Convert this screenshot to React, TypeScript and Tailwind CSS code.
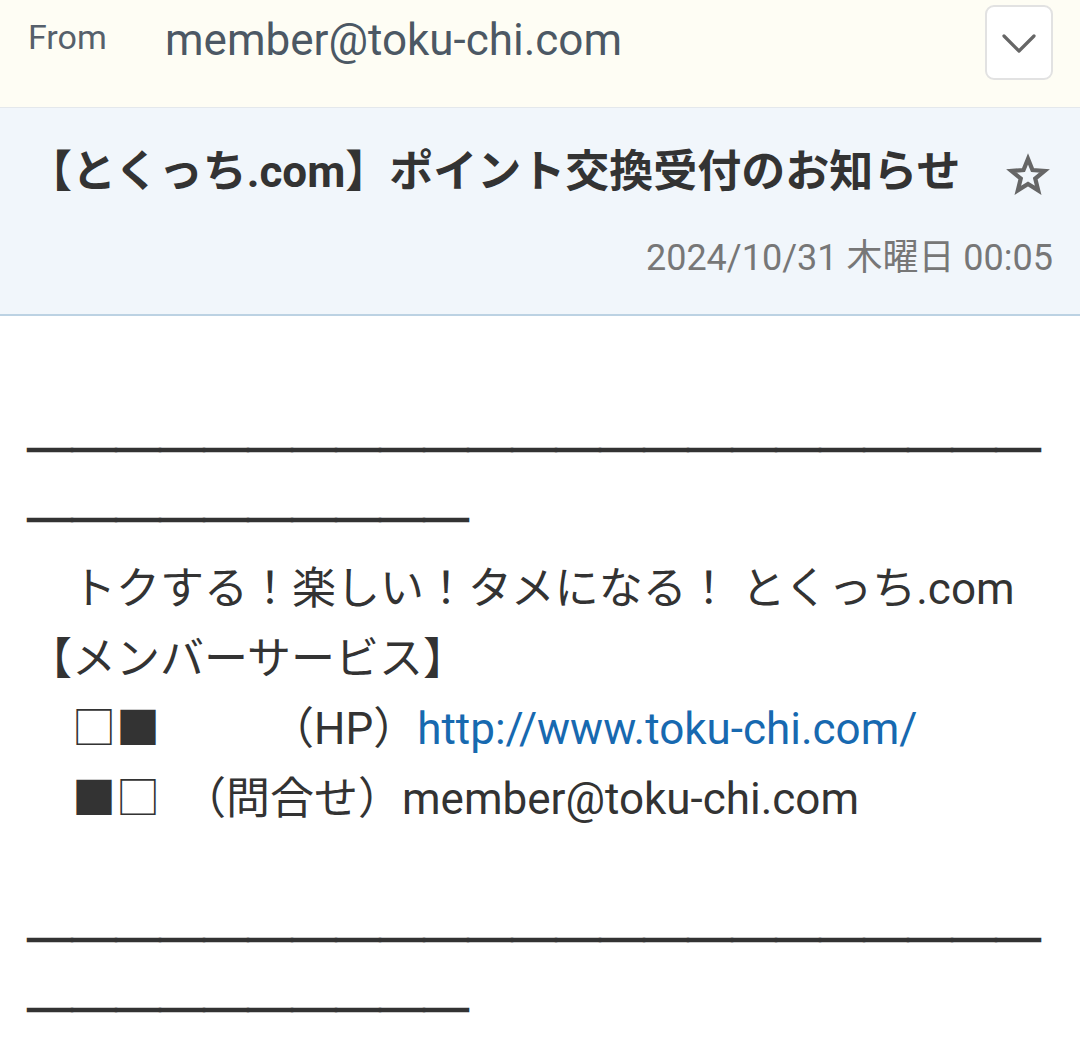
const font = { fontFamily: 'Roboto, "Noto Sans CJK JP", sans-serif' }

function StarOutline() {
    return (
        <svg width="44" height="44" viewBox="0 0 24 24" fill="none" stroke="#666" strokeWidth="2.3" strokeLinejoin="miter">
            <path d="M12 3.2l2.45 6.1 6.55.45-5.05 4.2 1.6 6.4L12 16.85 6.45 20.35l1.6-6.4L3 9.75l6.55-.45z" />
        </svg>
    )
}

function Chevron() {
    return (
        <svg width="36" height="22" viewBox="0 0 36 22" fill="none" stroke="#666" strokeWidth="3.2" strokeLinecap="round" strokeLinejoin="round">
            <path d="M3 4l15 15 15-15" />
        </svg>
    )
}

export default function App() {
    const bar = '＿'.repeat(33)

    return (
        <div className="w-[1080px] min-h-[1037px] bg-white text-[#333]" style={font}>
            {/* From */}
            <div className="h-[108px] bg-[#fefdf4] border-b border-[#e4e8ec] flex items-start pl-[28px] pr-[27px] pt-[5px]">
                <div className="text-[34px] text-[#56606b] mt-[7px] w-[137px]">From</div>
                <div className="text-[44px] text-[#4c5864] leading-none mt-[13px] flex-1">member@toku-chi.com</div>
                <button className="w-[68px] h-[75px] rounded-[9px] border-2 border-[#e2e2e2] bg-white flex items-center justify-center">
                    <Chevron />
                </button>
            </div>

            {/* Subject */}
            <div className="h-[208px] bg-[#f1f6fb] border-b-2 border-[#bcd2e3] pl-[28px] pr-[27px]">
                <div className="flex items-start justify-between pt-[32px]">
                    <h1 className="text-[44px] font-bold leading-[64px] text-[#333]">【とくっち.com】ポイント交換受付のお知らせ</h1>
                    <div className="mt-[13px] mr-[3px]">
                        <StarOutline />
                    </div>
                </div>
                <div className="text-right text-[36px] text-[#777] mt-[27px]">2024/10/31 木曜日 00:05</div>
            </div>

            {/* Body */}
            <div className="px-[28px] pt-[98px] text-[44px] leading-[70px] text-[#333] break-all">
                <div className="-mt-[18px] mb-[18px] font-bold text-[#333] [-webkit-text-stroke:2.5px_#333]">{bar}</div>
                <div>{'　トクする！楽しい！タメになる！ とくっち.com'}</div>
                <div>{'【メンバーサービス】'}</div>
                <div>
                    {'　□■　　　（HP）'}
                    <a href="#" className="text-[#1769b0]">http://www.toku-chi.com/</a>
                </div>
                <div>{'　■□　（問合せ）member@toku-chi.com'}</div>
                <div className="h-[70px]" />
                <div className="-mt-[18px] mb-[18px] font-bold text-[#333] [-webkit-text-stroke:2.5px_#333]">{bar}</div>
            </div>
        </div>
    )
}
